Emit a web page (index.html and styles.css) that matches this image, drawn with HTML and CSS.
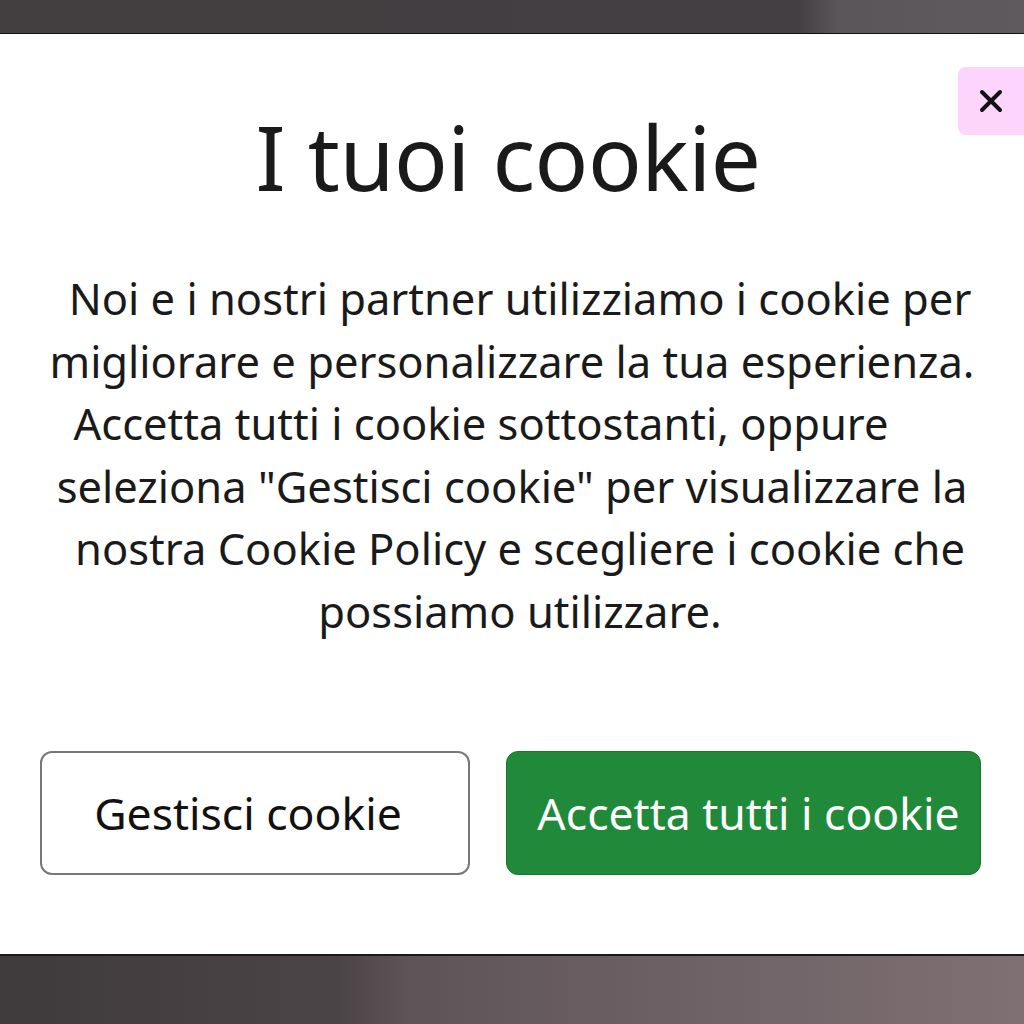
FILE: index.html
```html
<!DOCTYPE html>
<html lang="it">
<head>
<meta charset="UTF-8">
<meta name="viewport" content="width=device-width, initial-scale=1.0">
<title>I tuoi cookie</title>
<link rel="stylesheet" href="styles.css">
</head>
<body>
<div class="backdrop">
    <div class="top-strip"></div>
    <div class="modal">
        <button class="close-btn" aria-label="Chiudi">
            <svg width="26" height="26" viewBox="0 0 26 26">
                <path d="M4 4 L22 22 M22 4 L4 22" stroke="#111" stroke-width="4" stroke-linecap="round"/>
            </svg>
        </button>
        <h1>I tuoi cookie</h1>
        <p class="intro">
            <span class="line r1">Noi e i nostri partner utilizziamo i cookie per</span>
            <span class="line">migliorare e personalizzare la tua esperienza.</span>
            <span class="line l3">Accetta tutti i cookie sottostanti, oppure</span>
            <span class="line">seleziona "Gestisci cookie" per visualizzare la</span>
            <span class="line r1">nostra Cookie Policy e scegliere i cookie che</span>
            <span class="line r1">possiamo utilizzare.</span>
        </p>
        <div class="actions">
            <button class="btn btn-outline">Gestisci cookie</button>
            <button class="btn btn-green">Accetta tutti i cookie</button>
        </div>
    </div>
    <div class="bottom-strip"></div>
</div>
</body>
</html>
```

FILE: styles.css
```css
html, body {
    margin: 0;
    padding: 0;
}
body {
    font-family: 'Noto Sans', 'Open Sans', sans-serif;
    color: #1a1a1a;
    background-color: #4a4446;
}
.backdrop {
    width: 1024px;
    height: 1024px;
    display: flex;
    flex-direction: column;
    overflow: hidden;
}
.top-strip {
    height: 33px;
    background: linear-gradient(90deg, #433f41 0%, #443f42 78%, #5a5659 82%, #5e5a5d 100%);
    border-bottom: 1px solid #111;
}
.modal {
    position: relative;
    height: 922px;
    background-color: #fff;
    box-sizing: border-box;
    padding-top: 68px;
    border-bottom: 2px solid #1a1a1a;
}
.bottom-strip {
    flex: 1;
    background: linear-gradient(90deg, #3f3a3b 0%, #4a4446 33%, #5e5458 40%, #6d6064 65%, #7e7073 100%);
}
.close-btn {
    position: absolute;
    top: 33px;
    right: -8px;
    width: 74px;
    height: 68px;
    border: none;
    border-radius: 8px;
    background-color: #fdd4fb;
    display: flex;
    align-items: center;
    justify-content: center;
    padding: 0 8px 0 0;
    cursor: pointer;
}
h1 {
    margin: 0;
    font-size: 89px;
    font-weight: 400;
    line-height: 110px;
    text-align: center;
    letter-spacing: -0.5px;
    color: #1a1a1a;
    padding-right: 8px;
}
.intro {
    margin: 55px 0 0;
    font-size: 43.5px;
    line-height: 62.6px;
    text-align: center;
    color: #1a1a1a;
}
.line {
    display: block;
}
.r1 {
    padding-left: 16px;
}
.l3 {
    padding-right: 62px;
}
.actions {
    display: flex;
    gap: 36px;
    padding: 0 43px 0 40px;
    margin-top: 108px;
}
.btn {
    height: 124px;
    font-family: inherit;
    font-size: 44.5px;
    border-radius: 12px;
    cursor: pointer;
    box-sizing: border-box;
}
.btn-outline {
    width: 430px;
    background-color: #fff;
    border: 2px solid #777;
    color: #111;
    padding: 0 14px 0 0;
}
.btn-green {
    flex: 1;
    background-color: #218a3a;
    border: 1px solid #17782d;
    color: #fff;
    padding: 0 0 0 10px;
}
```
